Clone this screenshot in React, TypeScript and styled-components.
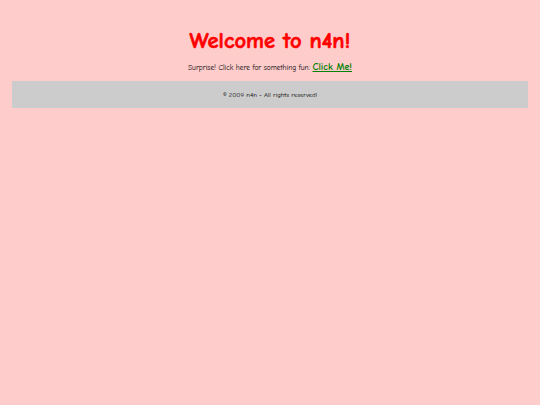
import React from "react";
import styled, { createGlobalStyle } from "styled-components";

const GlobalStyle = createGlobalStyle`
  body {
    margin: 0;
    background: #ffcccc;
    font-family: "Comic Sans MS", "Comic Neue", cursive, sans-serif;
  }
`;

const Page = styled.div`
  padding: 12px;
  text-align: center;
`;

const Title = styled.h1`
  margin: 16px 0 7px;
  font-size: 22.5px;
  font-weight: 900;
  color: #ff0000;
  -webkit-text-stroke: 0.6px #ff0000;
`;

const Lead = styled.p`
  margin: 0 0 8px;
  font-size: 7.4px;
  color: #000;
`;

const FunLink = styled.a`
  font-size: 10px;
  font-weight: bold;
  color: #008000;
  text-decoration: underline;
`;

const Footer = styled.footer`
  background: #cccccc;
  height: 27px;
  display: flex;
  align-items: center;
  justify-content: center;
  font-size: 6.7px;
  color: #000;
`;

export default function App() {
  return (
    <>
      <GlobalStyle />
      <Page>
        <Title>Welcome to n4n!</Title>
        <Lead>
          Surprise! Click here for something fun: <FunLink href="#">Click Me!</FunLink>
        </Lead>
        <Footer>© 2009 n4n - All rights reserved!</Footer>
      </Page>
    </>
  );
}
